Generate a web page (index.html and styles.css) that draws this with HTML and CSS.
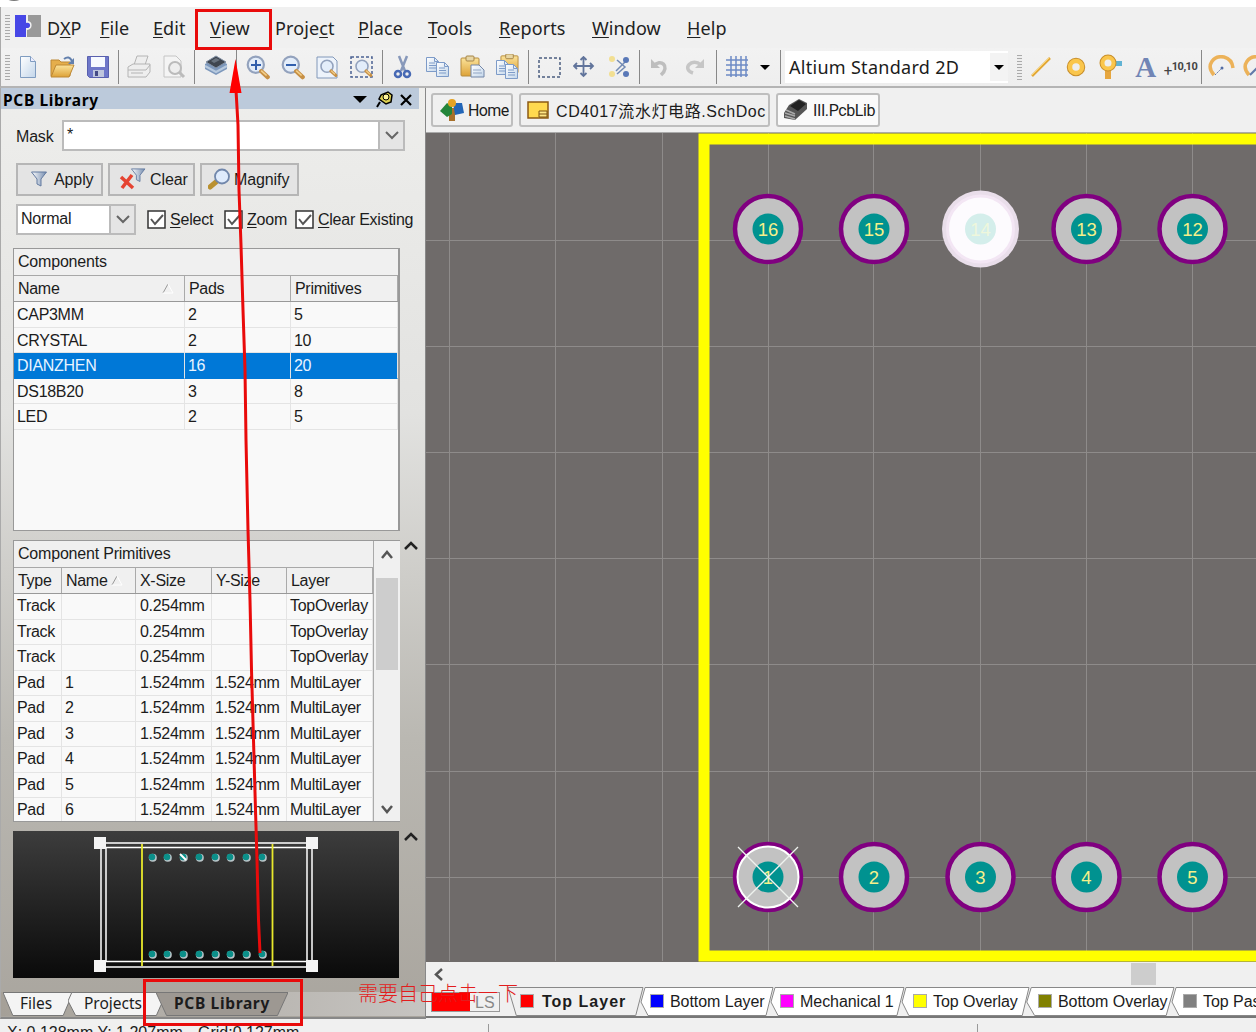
FILE: index.html
```html
<!DOCTYPE html>
<html lang="en">
<head>
<meta charset="utf-8">
<title>PCB Library</title>
<link rel="stylesheet" href="styles.css">
</head>
<body>
<svg class="defs" width="0" height="0">
<defs>
<linearGradient id="gold" x1="0" y1="0" x2="0" y2="1"><stop offset="0" stop-color="#fbe39a"/><stop offset="1" stop-color="#dda237"/></linearGradient>
<linearGradient id="paper" x1="0" y1="0" x2="1" y2="1"><stop offset="0" stop-color="#fff"/><stop offset="1" stop-color="#c3d6ea"/></linearGradient>
<linearGradient id="dark" x1="0" y1="0" x2="0" y2="1"><stop offset="0" stop-color="#3d3d3d"/><stop offset="1" stop-color="#0a0a0a"/></linearGradient>
<linearGradient id="steel" x1="0" y1="0" x2="1" y2="0"><stop offset="0" stop-color="#fff"/><stop offset="1" stop-color="#7189ad"/></linearGradient>
<g id="lens"><circle cx="10" cy="9" r="7.5" fill="#e3edfa" stroke="#93a2bd" stroke-width="2"/><path d="M15 15l6 5.5" stroke="#c79045" stroke-width="4" stroke-linecap="round"/><path d="M15 14.500l5 4.500" stroke="#f3cf8a" stroke-width="1.500"/></g>
<g id="sheet"><path d="M.5.5h8l4 4v10h-12z" fill="url(#paper)" stroke="#7d9bc8"/><path d="M8.500.5v4h4M3 6h6M3 8.500h7M3 11h7" fill="none" stroke="#7d9bc8"/></g>
<g id="clip"><rect x="1" y="3" width="18" height="18" rx="1" fill="url(#gold)" stroke="#b68c3f"/><rect x="6" y="1" width="8" height="5" rx="1" fill="#e7d6a5" stroke="#a58446"/></g>
<g id="funnel"><path d="M.5 1h15L10 8v7l-4-2V8z" fill="url(#steel)" stroke="#637aa0"/></g>
<g id="pad"><circle r="33" fill="#c2c2c2" stroke="#800080" stroke-width="4.500"/><circle r="15.500" fill="#009290"/></g>
<g id="mini"><circle cx=".8" cy=".8" r="4" fill="#b9c4c8"/><circle r="3.300" fill="#0b8f89"/></g>
<g id="check"><path d="M1 1h17v17H1z" fill="#fff" stroke="#333" stroke-width="1.500"/><path d="M4 9l4 5 8-9" fill="none" stroke="#555" stroke-width="2"/></g>
</defs>
</svg>

<div class="app">
<div class="topstrip"><svg width="40" height="7"><ellipse cx="14" cy="-4" rx="9" ry="5" fill="#777"/></svg></div>

<nav class="menubar">
<i class="grip"></i>
<svg class="logo" width="26" height="24"><path d="M0 1h11v8c5-2 6 6 0 5v9H0z" fill="#4747e6"/><path d="M26 1v22H12v-7c6 0 6-9 1-9V1z" fill="#999"/></svg>
<div class="menus"><span>D<u>X</u>P</span><span><u>F</u>ile</span><span><u>E</u>dit</span><span><u>V</u>iew</span><span>Proje<u>c</u>t</span><span><u>P</u>lace</span><span><u>T</u>ools</span><span><u>R</u>eports</span><span><u>W</u>indow</span><span><u>H</u>elp</span></div>
</nav>

<div class="toolbar">
<i class="grip"></i>
<b><svg width="24" height="24"><path d="M4.500 1.500h10l5 5v16h-15z" fill="url(#paper)" stroke="#7f9cc0"/><path d="M14.500 1.500v5h5" fill="#eef" stroke="#7f9cc0"/></svg></b>
<b><svg width="26" height="24"><path d="M1 5h8l2 2h9v14H1z" fill="#e5ae4b" stroke="#bd8835"/><path d="M1 22l5-12h18l-5 12z" fill="url(#gold)" stroke="#bd8835"/><path d="M14 4q5-4 8 2" fill="none" stroke="#6380ad" stroke-width="2"/><path d="M24 3v6h-6z" fill="#6380ad"/></svg></b>
<b><svg width="24" height="24"><path d="M1.500 1.500h21v21h-19l-2-2z" fill="#6e77c9" stroke="#5960ae"/><path d="M5 2h14v10H5z" fill="#f6f9ff"/><path d="M7 15h11v7H7z" fill="#bfc6dd"/><path d="M9 16h3v5H9z" fill="#444a86"/></svg></b>
<s></s>
<b><svg width="26" height="24" fill="#eee" stroke="#b4b4b4"><path d="M8 10l3-9h11l-3 9z"/><path d="M2 12l5-3h17v8l-4 5H2z"/><path d="M2 15h18l4-5M5 18h12" fill="none"/></svg></b>
<b><svg width="26" height="24"><path d="M3 1h12l5 5v16H3z" fill="#f4f4f4" stroke="#c4c4c4"/><circle cx="14" cy="13" r="6" fill="#eee" stroke="#bbb" stroke-width="2"/><path d="M18 17l5 5" stroke="#bbb" stroke-width="3"/></svg></b>
<s></s>
<b><svg class="up" width="24" height="22"><path d="M1 10l11-6 11 6v5l-11 6-11-6z" fill="#7d98bc"/><path d="M1 12l11 6 11-6" fill="none" stroke="#b7c9de" stroke-width="2"/><path d="M2 8l10-6 10 6-10 6z" fill="#3f4650" stroke="#8291a5"/><path d="M7 7l5-3 4 2-6 3z" fill="#68727e"/></svg></b>
<s></s>
<b><svg width="26" height="26"><use href="#lens" transform="translate(1 1) scale(1.080)"/><path d="M7 11h10M12 6v10" stroke="#315fad" stroke-width="2"/></svg></b>
<b><svg width="26" height="26"><use href="#lens" transform="translate(1 1) scale(1.080)"/><path d="M7 11h10" stroke="#315fad" stroke-width="2"/></svg></b>
<b><svg width="26" height="26"><path d="M3 3h16l4 4v17H3z" fill="#edf3fb" stroke="#8298b9"/><use href="#lens" transform="translate(5 5) scale(.8)"/></svg></b>
<b><svg width="26" height="26"><path d="M2 3h21v20H2z" fill="none" stroke="#4b6192" stroke-width="1.500" stroke-dasharray="3 2"/><use href="#lens" transform="translate(5 5) scale(.8)"/></svg></b>
<s></s>
<b><svg width="20" height="24" fill="none"><path d="M6 1l6 15M14 1L8 16" stroke="#8798ba" stroke-width="2.500"/><circle cx="5" cy="19" r="3" stroke="#4769b4" stroke-width="2.500"/><circle cx="14" cy="19" r="3" stroke="#4769b4" stroke-width="2.500"/></svg></b>
<b><svg width="26" height="24"><use href="#sheet" transform="translate(1 2)"/><use href="#sheet" transform="translate(11 7)"/></svg></b>
<b><svg width="26" height="24"><use href="#clip"/><path d="M11 10h8l5 5v7H11z" fill="url(#paper)" stroke="#7286a8"/><path d="M13 15h8M13 18h9" stroke="#91a5c4"/></svg></b>
<b><svg width="26" height="26"><use href="#clip" transform="translate(5 -1) scale(.95)"/><use href="#sheet" transform="translate(1 6)"/><use href="#sheet" transform="translate(10 10)"/></svg></b>
<s></s>
<b><svg width="24" height="24"><path d="M2 3h21v19H2z" fill="none" stroke="#4b5e80" stroke-width="1.500" stroke-dasharray="3 2"/></svg></b>
<b><svg width="22" height="22" stroke="#61749b" fill="none" stroke-width="1.800"><path d="M1 10h19M10.500 1v19M4 7l-3 3 3 3M17 7l3 3-3 3M7.500 4l3-3 3 3M7.500 17l3 3 3-3"/></svg></b>
<b><svg width="24" height="24"><path d="M10 5l8 7-8 7M19 6L9 16" fill="none" stroke="#738bb4" stroke-width="1.500"/><g fill="#f2df92"><circle cx="5" cy="4" r="3"/><circle cx="5" cy="19" r="3"/></g><g fill="#5978b7"><circle cx="19" cy="5" r="3"/><circle cx="19" cy="19" r="3"/></g></svg></b>
<s></s>
<b><svg width="22" height="22"><path d="M5 10c6-8 17 0 7 9" fill="none" stroke="#bebebe" stroke-width="3.500"/><path d="M2 3v9h9z" fill="#bebebe"/></svg></b>
<b><svg width="22" height="22"><path d="M17 9C8 1-3 13 9 17" fill="none" stroke="#c6c6c6" stroke-width="3.500"/><path d="M20 3v9h-9z" fill="#c6c6c6"/></svg></b>
<s></s>
<b><svg width="24" height="24"><path d="M6 1v21M11 1v21M16 1v21M21 1v21M1 5h22M1 10h22M1 15h22M1 20h22" stroke="#6d8bc5" stroke-width="1.500"/></svg></b>
<i class="arrow"></i><s></s>
<div class="combo"><span>Altium Standard 2D</span><em><i class="arrow"></i></em></div>
<i class="grip two"></i>
<b><svg width="22" height="24"><path d="M2 21L20 3" stroke="#e2a736" stroke-width="2.500"/><path d="M2 20L19 3" stroke="#f9d777"/></svg></b>
<b><svg width="20" height="20"><circle cx="10" cy="10" r="6" fill="#fff" stroke="#c88f2c" stroke-width="6.500"/><circle cx="10" cy="10" r="6" fill="#eee" stroke="#fac64c" stroke-width="4.500"/></svg></b>
<b><svg width="26" height="26"><path d="M15 7h9v5h-9z" fill="#61b3d4"/><path d="M7 14h6v11H7z" fill="#e6a63f"/><circle cx="10" cy="9" r="5.500" fill="#fff" stroke="#c88f2c" stroke-width="6"/><circle cx="10" cy="9" r="5.500" fill="#eee" stroke="#fac64c" stroke-width="4"/></svg></b>
<b class="letter">A</b>
<b class="coord"><small>+</small>10,10</b>
<s></s>
<b><svg width="28" height="24"><path d="M6 20C-3 10 6 0 16 2q8 2 9 11" fill="none" stroke="#ecb259" stroke-width="3.500"/><path d="M7 20l7-7" stroke="#6279a9" stroke-dasharray="2 1"/><circle cx="14" cy="13" r="1.500" fill="#526ca4"/></svg></b>
<b><svg width="28" height="24"><path d="M6 20C-3 10 6 0 16 2q8 2 9 11" fill="none" stroke="#ecb259" stroke-width="3.500"/><path d="M7 20l7-7" stroke="#6279a9" stroke-width="2"/></svg></b>
</div>

<main>
<aside>
<header><strong>PCB Library</strong><svg width="64" height="20"><path d="M1 6h14l-7 7z"/><path d="M28 12l-3 5" stroke="#000" stroke-width="2"/><path d="M29 5l7-3 4 3-1 7-5 2-7-5z" fill="#ddd052" stroke="#000" stroke-width="1.500"/><circle cx="34" cy="7" r="3" fill="#fff59a" stroke="#000"/><path d="M49 5l10 10M59 5L49 15" stroke="#000" stroke-width="2.200"/></svg></header>
<section class="form">
<div class="mask"><label>Mask</label><div class="select"><span>*</span><em><svg width="14" height="9"><path d="M1 1l6 6 6-6"/></svg></em></div></div>
<div class="buttons"><div class="btn"><svg width="17" height="17"><use href="#funnel"/></svg>Apply</div><div class="btn clear"><svg width="27" height="24"><use href="#funnel" transform="translate(12 0) scale(.9)"/><path d="M2 9l12 11M13 7L3 20" stroke="#e54432" stroke-width="3.500"/></svg>Clear</div><div class="btn mag"><svg width="23" height="23"><path d="M8 14l-6 5" stroke="#ba9130" stroke-width="5" stroke-linecap="round"/><circle cx="14" cy="8.500" r="7" fill="#dfebfc" stroke="#7187ab" stroke-width="1.800"/></svg>Magnify</div></div>
<div class="options"><div class="select"><span>Normal</span><em><svg width="14" height="9"><path d="M1 1l6 6 6-6"/></svg></em></div><label class="c1"><svg width="19" height="19"><use href="#check"/></svg><span><u>S</u>elect</span></label><label class="c2"><svg width="19" height="19"><use href="#check"/></svg><span><u>Z</u>oom</span></label><label class="c3"><svg width="19" height="19"><use href="#check"/></svg><span><u>C</u>lear Existing</span></label></div>
</section>
<section class="table comps">
<h2>Components</h2>
<div class="row head"><span>Name<svg width="12" height="11"><path d="M1 10L6 1" stroke="#999"/><path d="M6 1l5 9H1" fill="none" stroke="#fff"/></svg></span><span>Pads</span><span>Primitives</span></div>
<div class="row"><span>CAP3MM</span><span>2</span><span>5</span></div>
<div class="row"><span>CRYSTAL</span><span>2</span><span>10</span></div>
<div class="row sel"><span>DIANZHEN</span><span>16</span><span>20</span></div>
<div class="row"><span>DS18B20</span><span>3</span><span>8</span></div>
<div class="row"><span>LED</span><span>2</span><span>5</span></div>
</section>
<div class="with-toggle">
<section class="prims">
<div class="table">
<h2>Component Primitives</h2>
<div class="row head"><span>Type</span><span>Name<svg width="12" height="11"><path d="M1 10L6 1" stroke="#999"/><path d="M6 1l5 9H1" fill="none" stroke="#fff"/></svg></span><span>X-Size</span><span>Y-Size</span><span>Layer</span></div>
<div class="row"><span>Track</span><span></span><span>0.254mm</span><span></span><span>TopOverlay</span></div>
<div class="row"><span>Track</span><span></span><span>0.254mm</span><span></span><span>TopOverlay</span></div>
<div class="row"><span>Track</span><span></span><span>0.254mm</span><span></span><span>TopOverlay</span></div>
<div class="row"><span>Pad</span><span>1</span><span>1.524mm</span><span>1.524mm</span><span>MultiLayer</span></div>
<div class="row"><span>Pad</span><span>2</span><span>1.524mm</span><span>1.524mm</span><span>MultiLayer</span></div>
<div class="row"><span>Pad</span><span>3</span><span>1.524mm</span><span>1.524mm</span><span>MultiLayer</span></div>
<div class="row"><span>Pad</span><span>4</span><span>1.524mm</span><span>1.524mm</span><span>MultiLayer</span></div>
<div class="row"><span>Pad</span><span>5</span><span>1.524mm</span><span>1.524mm</span><span>MultiLayer</span></div>
<div class="row"><span>Pad</span><span>6</span><span>1.524mm</span><span>1.524mm</span><span>MultiLayer</span></div>
</div>
<div class="vscroll"><svg width="12" height="9"><path d="M1 8l5-6 5 6"/></svg><i></i><svg width="12" height="9"><path d="M1 1l5 6 5-6"/></svg></div>
</section>
<svg class="toggle" width="16" height="12"><path d="M2 9l6-6 6 6"/></svg>
</div>
<div class="with-toggle preview">
<svg width="386" height="147" viewBox="0 1 386 147"><rect width="386" height="148" fill="url(#dark)"/>
<g fill="none" stroke="#fff" stroke-width="1.500"><path d="M88 13h211v124H88zM93 17.500h201v114H93z"/></g>
<path d="M129 14v122M259.500 14v122" stroke="#e8e82c" stroke-width="1.800"/>
<g fill="#f4f4f4"><path d="M81 7h12v12H81zM293 7h12v12h-12zM81 130h12v12H81zM293 130h12v12h-12z"/></g>
<g><use href="#mini" x="139" y="27"/><use href="#mini" x="154" y="27"/><use href="#mini" x="170" y="27"/><use href="#mini" x="186" y="27"/><use href="#mini" x="202" y="27"/><use href="#mini" x="217" y="27"/><use href="#mini" x="233" y="27"/><use href="#mini" x="249" y="27"/><path d="M167 24l6 6" stroke="#fff" stroke-width="2"/>
<use href="#mini" x="139" y="124"/><use href="#mini" x="154" y="124"/><use href="#mini" x="170" y="124"/><use href="#mini" x="186" y="124"/><use href="#mini" x="202" y="124"/><use href="#mini" x="217" y="124"/><use href="#mini" x="233" y="124"/><use href="#mini" x="249" y="124"/></g></svg>
<svg class="toggle" width="16" height="12"><path d="M2 9l6-6 6 6"/></svg>
</div>
<div class="ptabs">
<div class="ptab files"><svg viewBox="0 0 100 24" preserveAspectRatio="none"><path d="M0 .5h100L86 23.500H14z"/></svg><span>Files</span></div>
<div class="ptab projects"><svg viewBox="0 0 100 24" preserveAspectRatio="none"><path d="M4 .5h92l4 8-7 15H8L0 9z"/></svg><span>Projects</span></div>
<div class="ptab active"><svg viewBox="0 0 100 24" preserveAspectRatio="none"><path d="M0 .5h100l-8 23H8z"/></svg><span>PCB Library</span></div>
</div>
</aside>

<article>
<div class="docs">
<div class="doc home"><svg width="26" height="24"><path d="M10 10h6v13h-6z" fill="#a8702a"/><path d="M1 13l7-8 5 3v8l-5 3z" fill="#24853a"/><path d="M14 5h9l2 10-9 2z" fill="#2366b8"/><circle cx="13" cy="5" r="4" fill="#e5a324"/></svg><span>Home</span></div>
<div class="doc sch"><svg width="22" height="18"><path d="M1 1h20v16H1z" fill="#ffd94f" stroke="#8c5a14" stroke-width="1.500"/><path d="M12 10h8v6h-8zM12 13h8" fill="#ffe684" stroke="#7d5313"/></svg><span>CD4017流水灯电路.SchDoc</span></div>
<div class="doc lib"><svg width="25" height="24"><path d="M6 7l10-6 8 4v6L12 22 1 20v-5z" fill="#555"/><path d="M7 8l9-6 7 4-8 7z" fill="#222"/><path d="M2 15l10 3M2 18l10 3M3 12l9 4" stroke="#aaa" stroke-width="1.500"/></svg><span>III.PcbLib</span></div>
</div>
<svg class="board" width="830" height="829" viewBox="426 133 830 829">
<rect x="426" y="133" width="830" height="829" fill="#6f6b6a"/>
<path d="M449.500 133v828M555.500 133v828M662.500 133v828M768.500 133v828M873.500 133v828M980.500 133v828M1086.500 133v828M1192.500 133v828M426 240.500h830M426 346.500h830M426 452.500h830M426 558.500h830M426 664.500h830M426 771.500h830M426 877.500h830" stroke="#8e8b8a"/>
<path d="M1260 139H704v817h556" fill="none" stroke="#ff0" stroke-width="11"/>
<g><use href="#pad" x="768" y="229"/><use href="#pad" x="874" y="229"/><use href="#pad" x="1086.500" y="229"/><use href="#pad" x="1192.500" y="229"/><use href="#pad" x="768" y="877"/><use href="#pad" x="874" y="877"/><use href="#pad" x="980.500" y="877"/><use href="#pad" x="1086.500" y="877"/><use href="#pad" x="1192.500" y="877"/></g>
<circle cx="980.500" cy="229" r="38.500" fill="#e9deea"/><circle cx="980.500" cy="229" r="33" fill="#fdfbfe" stroke="#f3e6f4" stroke-width="3"/><circle cx="980.500" cy="229" r="15.500" fill="#d4eeeb"/>
<circle cx="768" cy="877" r="30.500" fill="none" stroke="#fff" stroke-width="2"/>
<g class="num"><text x="768" y="236">16</text><text x="874" y="236">15</text><text x="980.500" y="236" fill="#eef7dc">14</text><text x="1086.500" y="236">13</text><text x="1192.500" y="236">12</text><text x="768" y="884">1</text><text x="874" y="884">2</text><text x="980.500" y="884">3</text><text x="1086.500" y="884">4</text><text x="1192.500" y="884">5</text></g>
<path d="M738 847l60 60M798 847l-60 60" stroke="#eef2ee" stroke-width="1.300"/>
</svg>
<div class="hscroll"><svg width="11" height="13"><path d="M9 1L3 6.500 9 12"/></svg><i></i></div>
<div class="layers">
<div class="ls"><i></i><span>LS</span></div>
<div class="layer on l1"><svg viewBox="0 0 130 30" preserveAspectRatio="none"><path d="M0 .5h130l-7 28H8z"/></svg><i></i><span>Top Layer</span></div>
<div class="layer l2"><svg viewBox="0 0 130 30" preserveAspectRatio="none"><path d="M2 .5h128l-7 28H5L-2 15z"/></svg><i></i><span>Bottom Layer</span></div>
<div class="layer l3"><svg viewBox="0 0 130 30" preserveAspectRatio="none"><path d="M2 .5h128l-7 28H5L-2 15z"/></svg><i></i><span>Mechanical 1</span></div>
<div class="layer l4"><svg viewBox="0 0 130 30" preserveAspectRatio="none"><path d="M2 .5h128l-7 28H5L-2 15z"/></svg><i></i><span>Top Overlay</span></div>
<div class="layer l5"><svg viewBox="0 0 130 30" preserveAspectRatio="none"><path d="M2 .5h128l-7 28H5L-2 15z"/></svg><i></i><span>Bottom Overlay</span></div>
<div class="layer l6"><svg viewBox="0 0 130 30" preserveAspectRatio="none"><path d="M2 .5h128l-7 28H5L-2 15z"/></svg><i></i><span>Top Paste</span></div>
</div>
</article>
</main>
<footer><div class="coords">X: 0.128mm Y: 1.207mm</div><div class="gridsize">Grid:0.127mm</div><i></i><i></i></footer>
</div>

<svg class="notes" width="1256" height="1032">
<g fill="none" stroke="#e90b0b" stroke-width="3"><path d="M196.500 10.500h74v38h-74zM144.500 980.500h157v44h-157z"/><path d="M236 90L238 125 239 190 241 245 243 310 245 370 246 440 248 530 250 600 251.500 670 253.500 740 255.500 810 257 860 258.500 920 260 953"/></g>
<path d="M235.500 59l6 34h-12z" fill="#f00"/>
<text x="358" y="1001">需要自己点击一下</text>
</svg>
</body>
</html>
```
FILE: styles.css
```css
* { box-sizing: border-box; }
body { margin: 0; width: 1256px; height: 1032px; overflow: hidden; background: #f0f0f0; color: #1c1c1c; font-family: "Liberation Sans", "Noto Sans CJK SC", sans-serif; font-size: 16px; }
svg { display: block; flex: none; }
.defs { position: absolute; }
u { text-underline-offset: 2px; text-decoration-thickness: 1px; }
.app { display: flex; flex-direction: column; width: 1256px; height: 1032px; overflow: hidden; }
.topstrip { height: 7px; flex: none; background: #fff; }
.grip { width: 5px; height: 25px; flex: none; background: repeating-linear-gradient(#aaa 0 1px, #eee 1px 3px); }

.menubar { height: 41px; flex: none; display: flex; align-items: center; padding-left: 4px; border-left: 1px solid #aaa; }
.logo { margin-left: 5px; margin-right: 6px; margin-top: -3px; }
.menus { display: grid; grid-template-columns: 53px 53px 57px 65px 83px 70px 71px 93px 95px 60px; font: 18px/26px "Noto Sans", "Open Sans", sans-serif; letter-spacing: .1px; white-space: nowrap; color: #222; }

.toolbar { height: 40px; flex: none; display: flex; align-items: center; padding-left: 4px; background: linear-gradient(#f2f2f2, #eee); border-bottom: 2px solid #b4b4b4; border-left: 1px solid #aaa; }
.toolbar > .grip { margin-right: .6px; }
.toolbar > b { width: 34.8px; flex: none; display: flex; justify-content: center; }
.toolbar > s { width: 6.8px; height: 34px; flex: none; background: linear-gradient(#888, #888) 3px 0 / 1px 100% no-repeat; }
.up { margin-top: -4px; }
.arrow { display: block; flex: none; width: 0; height: 0; margin: 0 7px 0 6px; border: 5px solid transparent; border-top-color: #000; border-bottom: 0; }
.combo { width: 223px; height: 32px; flex: none; margin-left: 1px; padding-left: 4px; display: flex; align-items: center; background: #fff; font: 18px/30px "Noto Sans", "Open Sans", sans-serif; letter-spacing: .3px; white-space: nowrap; }
.combo span { flex: 1; }
.combo em { width: 18px; height: 28px; background: #f3f3f3; display: flex; align-items: center; }
.combo .arrow { margin: 0 4px; }
.toolbar .two { margin: 0 2px 0 9px; }
.toolbar .letter { font: bold 29px/28px "Liberation Serif", serif; color: #7185b5; }
.toolbar .coord { font: bold 11px/14px Roboto, sans-serif; letter-spacing: -.5px; color: #444; align-items: center; }
.coord small { font-size: 15px; font-weight: 400; margin-top: 8px; }

main { flex: 1; min-height: 0; display: grid; grid-template-columns: 426px 830px; }
aside { display: flex; flex-direction: column; background: linear-gradient(#eeeeec, #e2e2e0 35%, #bab8b2 70%, #a9a59e); border-left: 1px solid #aaa; border-right: 1px solid #888; border-bottom: 2px solid #888; min-height: 0; }
aside header { height: 21px; width: 418px; flex: none; display: flex; align-items: center; justify-content: space-between; padding: 3px 3px 0 2px; background: #bccadb; color: #000; font: 15.500px/20px "Noto Sans", "Open Sans", sans-serif; letter-spacing: .65px; }
.form { height: 139px; flex: none; padding: 11px 0 0 15px; letter-spacing: -.2px; }
.mask { display: flex; align-items: center; gap: 7px; height: 31px; }
.mask label { width: 39px; padding-top: 3px; }
.select { display: flex; height: 31px; background: #fff; border: 2px solid #bbb; }
.mask .select { width: 343px; }
.select span { flex: 1; padding: 4px 3px; line-height: 18px; }
.select em { width: 25px; display: flex; align-items: center; justify-content: center; border-left: 2px solid #bbb; background: #e5e5e5; }
.select svg path { fill: none; stroke: #666; stroke-width: 2; }
.buttons { display: flex; gap: 5px; margin-top: 12px; }
.btn { width: 87px; height: 33px; display: flex; align-items: center; gap: 6px; padding-left: 13px; border: 2px solid #b6b6b6; background: #e4e4e4; letter-spacing: -.1px; }
.btn.clear { padding-left: 9px; gap: 4px; }
.btn.mag { width: 99px; padding-left: 6px; gap: 3px; }
.options { display: flex; margin-top: 8px; align-items: center; }
.options .select { width: 120px; }
.options label { display: flex; align-items: center; gap: 4px; white-space: nowrap; }
.c1 { width: 77px; margin-left: 11px; }
.c2 { width: 71px; }
.c3 { letter-spacing: -.25px; }

h2 { margin: 0; height: 27px; padding: 4px 4px 0; font-size: 16px; line-height: 18px; font-weight: 400; letter-spacing: -.2px; background: #f0f0f0; border-bottom: 1px solid #a8a8a8; }
.table { background: #f9f9f9; overflow: hidden; }
.comps { width: 387px; height: 283px; margin-left: 12px; flex: none; border: 1px solid #999; border-right-width: 2px; }
.row { display: grid; height: 25.500px; line-height: 24px; white-space: nowrap; letter-spacing: -.3px; }
.comps .row { grid-template-columns: 171px 106px 1fr; line-height: 25px; }
.row span { overflow: hidden; padding-left: 3px; border-right: 1px solid #e4e4e4; border-bottom: 1px solid #e4e4e4; }
.row.head { height: 26px; background: #f0f0f0; border-bottom: 1px solid #999; }
.row.head span { padding-left: 4px; border-bottom: 0; border-right-color: #aaa; display: flex; align-items: center; gap: 4px; }
.comps .head span:first-child { justify-content: space-between; padding-right: 10px; }
.sel span { background: #0078d7; color: #e9f4ff; border-bottom-color: #0078d7; }
.with-toggle { display: flex; gap: 3px; margin: 9px 0 0 12px; flex: none; }
.prims { width: 387px; height: 282px; display: flex; background: #f0f0f0; border: 1px solid #999; border-right: 0; }
.prims .table { width: 360px; border-right: 1px solid #aaa; }
.prims .row { grid-template-columns: 48px 74px 76px 75px 1fr; }
.prims .row:not(.head) span { letter-spacing: -.3px; }
.prims .row span:nth-child(3) { padding-left: 4px; }
.vscroll { flex: 1; display: flex; flex-direction: column; align-items: center; padding: 9px 1px 7px; }
.vscroll path, .toggle path, .hscroll path { fill: none; stroke: #555; stroke-width: 2.500; }
.toggle path { stroke: #222; }
.vscroll i { width: 22px; height: 92px; margin: 19px 0 auto; background: #cdcdcd; }
.preview { height: 147px; gap: 4px; }
.ptabs { display: flex; margin-top: 14px; padding-left: 2px; height: 24px; flex: none; font: 15.500px/22px "Noto Sans", "Open Sans", sans-serif; background: linear-gradient(90deg, #a5a098, #c6c4c1); }
.ptab { position: relative; display: flex; justify-content: center; }
.ptab svg { position: absolute; left: 0; top: 0; width: 100%; height: 24px; fill: #f4f4f4; stroke: #777; }
.ptab path, .layer path { vector-effect: non-scaling-stroke; }
.ptab span { position: relative; white-space: nowrap; }
.files { width: 70px; padding-right: 4px; }
.projects { width: 95px; margin-left: -5px; padding-right: 5px; }
.ptab.active { width: 132px; margin-left: -7px; font-weight: 700; letter-spacing: .65px; z-index: 1; }
.ptab.active svg { fill: #9d9892; }

article { display: flex; flex-direction: column; min-width: 0; }
.docs { height: 45px; flex: none; display: flex; align-items: center; gap: 6px; padding-left: 5px; border-bottom: 1px solid #aaa; }
.doc { height: 34px; display: flex; align-items: center; gap: 6px; padding-left: 6px; border: 2px solid #bebebe; border-radius: 3px; white-space: nowrap; background: #f0f0f0; font-family: Roboto, "Noto Sans CJK SC", sans-serif; }
.home { width: 82px; gap: 3px; letter-spacing: -.6px; }
.sch { width: 251px; gap: 7px; letter-spacing: .6px; font-family: "Liberation Sans", "Noto Sans CJK SC", sans-serif; }
.lib { width: 104px; background: #fafafa; padding-left: 5px; gap: 5px; letter-spacing: -.4px; }
.board { height: 829px; }
.num { font: 18.500px "Liberation Sans", sans-serif; text-anchor: middle; }
.num text:not([fill]) { fill: #f5f08a; }
.hscroll { height: 24px; flex: none; display: flex; align-items: center; padding-left: 7px; background: #f0f0f0; }
.hscroll i { width: 25px; height: 22px; margin-left: 687px; background: #cdcdcd; }
.layers { height: 32px; flex: none; display: flex; padding-top: 1px; overflow: hidden; border-bottom: 2px solid #777; }
.ls { width: 69px; height: 20px; margin: 5px 8px 0 5px; flex: none; display: flex; border: 1px solid #999; }
.ls i { width: 38px; background: #f00; }
.ls span { padding-left: 5px; line-height: 19px; color: #888; }
.layer { position: relative; display: flex; align-items: center; gap: 6px; flex: none; white-space: nowrap; letter-spacing: -.05px; }
.layer svg { position: absolute; left: 0; top: 0; width: 100%; height: 30px; overflow: visible; fill: #fff; stroke: #888; }
.layer i, .layer span { position: relative; }
.layer i { width: 14px; height: 14px; margin-left: 7px; margin-top: -2px; border: 1px solid #aaa; }
.layer.on { font-weight: 700; letter-spacing: 1px; gap: 8px; }
.layer.on svg { fill: #f0f0f0; }
.l1 { width: 135px; padding-left: 5px; } .l1 i { background: #f00; }
.l2 { width: 130px; } .l2 i { background: #00f; }
.l3 { width: 131px; } .l3 i { background: #f0f; }
.l4 { width: 125px; } .l4 i { background: #ff0; }
.l5 { width: 145px; } .l5 i { background: #808000; }
.l6 { width: 130px; } .l6 i { background: #808080; }
.l4, .l5, .l6 { padding-left: 2px; }
footer { height: 13px; flex: none; display: flex; padding-left: 7px; padding-top: 5px; overflow: hidden; line-height: 18px; white-space: nowrap; }
.coords { width: 191px; flex: none; }
.gridsize { width: 290px; flex: none; }
footer i { width: 489px; flex: none; height: 12px; border-left: 1px solid #999; }
.notes { position: absolute; left: 0; top: 0; pointer-events: none; }
.notes text { font: 20px "Liberation Serif", "Noto Sans CJK SC", serif; font-weight: 300; fill: #e21d1d; }
```
